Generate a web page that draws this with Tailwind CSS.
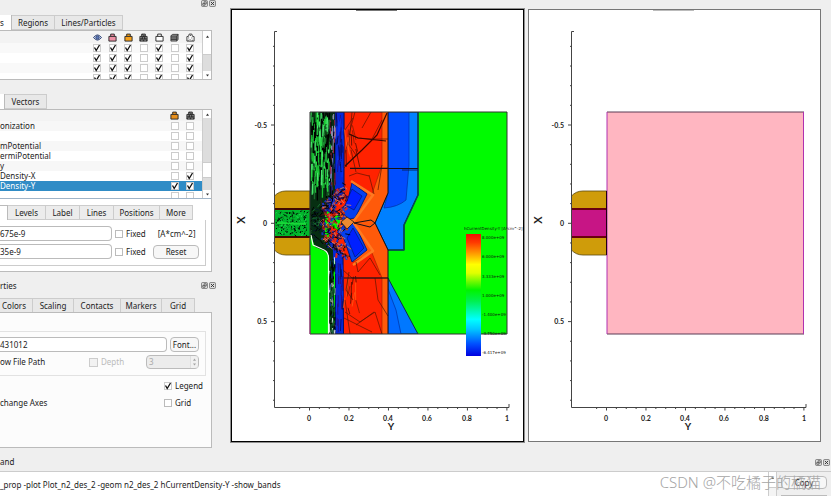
<!DOCTYPE html>
<html lang="en">
<head>
<meta charset="utf-8">
<title>Plot viewer</title>
<script src="https://cdn.jsdelivr.net/npm/@tailwindcss/browser@4"></script>
</head>
<body class="h-screen overflow-hidden bg-[#efefef] font-['Noto_Sans','Noto_Sans_CJK_SC',sans-serif] text-[8px] leading-[10px] text-[#222]">
<svg class="hidden">
  <symbol id="box" viewBox="0 0 10 10"><path d="M1 3.8H9V9H1Z M3 3.6V1.2H7V3.6" stroke="#222" stroke-width="1"/></symbol>
  <symbol id="mesh" viewBox="0 0 10 10"><path d="M1 3.8H9V9H1Z M3 3.6V1.2H7V3.6" fill="#999" stroke="#222"/><path d="M1 9L5 3.8L9 9M3 4L5 9L7 4M1 6.5H9M3.5 1.5L6.5 3.5" fill="none" stroke="#222" stroke-width=".8"/></symbol>
  <symbol id="dots" viewBox="0 0 10 10"><path d="M1 4L3 3.6L3.5 1.2H6.5L7 3.6L9 4V9H1Z" fill="#fff" stroke="#333"/><path d="M3 5v1M6.5 5v1M4.5 7v1M7 7.5v1M2.5 7.5v1M5 2.2v1" stroke="#333"/></symbol>
  <symbol id="cube" viewBox="0 0 10 10"><path d="M1 3L3 1.5H9V7L7.500 9H1Z" fill="#999" stroke="#222" stroke-width=".8"/><path d="M1 3.500H7.500V9M7.500 3.500L9 1.500M1 5.500H7.500M1 7.200H7.500" fill="none" stroke="#222" stroke-width=".8"/></symbol>
  <symbol id="eye" viewBox="0 0 10 10"><path d="M.5 5Q5-.8 9.500 5Q5 10.800 .5 5Z" fill="#b9c6e2" stroke="#2b3f70"/><circle cx="5" cy="5" r="1.900" fill="#5b78b8" stroke="#24365f" stroke-width=".7"/></symbol>
  <symbol id="float" viewBox="0 0 8 8"><rect x=".5" y=".5" width="7" height="7" rx="1.500" fill="#ddd" stroke="#777"/><path d="M2 4h2.500v2H2zM3.500 4V2H6v2.500H4.500" fill="none" stroke="#444" stroke-width=".8"/></symbol>
  <symbol id="close" viewBox="0 0 8 8"><rect x=".5" y=".5" width="7" height="7" rx="1.500" fill="#ddd" stroke="#777"/><path d="M2.200 2.200L5.800 5.800M5.800 2.200L2.200 5.800" stroke="#333" stroke-width="1.100"/></symbol>
  <symbol id="up" viewBox="0 0 6 4"><path d="M1 3.500L3 .8L5 3.500Z" fill="#333"/></symbol>
  <symbol id="down" viewBox="0 0 6 4"><path d="M1 .5L3 3.200L5 .5Z" fill="#333"/></symbol>
  <symbol id="axes" viewBox="232 10 291 431">
    <g id="axislines" fill="none" stroke="#444" stroke-width="1"></g>
    <g class="font-['Lato',sans-serif] font-bold" fill="#222" font-size="7">
      <g text-anchor="end"><text x="267" y="128">-0.5</text><text x="267" y="226">0</text><text x="267" y="324">0.5</text></g>
      <g text-anchor="middle"><text x="309" y="421">0</text><text x="349" y="421">0.2</text><text x="388" y="421">0.4</text><text x="427" y="421">0.6</text><text x="467" y="421">0.8</text><text x="507" y="421">1</text>
      <text x="391" y="430" font-size="10">Y</text><text transform="translate(245 220) rotate(-90)" font-size="11">X</text></g>
    </g>
  </symbol>
</svg>

<div class="flex h-full flex-col">
  <div class="flex h-[453px] shrink-0">
    <aside class="flex w-[231px] shrink-0 flex-col">
      <div class="flex h-[15px] justify-end gap-px pr-[15px]">
        <button aria-label="Float" class="size-[7px]"><svg class="size-[7px]"><use href="#float"/></svg></button>
        <button aria-label="Close" class="size-[7px]"><svg class="size-[7px]"><use href="#close"/></svg></button>
      </div>
      <nav class="flex h-[15px] w-[212px]">
        <button class="w-3 border-r border-[#bbb] bg-white text-left">s</button>
        <button class="w-[43px] border-y border-r border-[#ccc] bg-[#e8e8e8]">Regions</button>
        <button class="w-[68px] border-y border-r border-[#ccc] bg-[#e8e8e8]">Lines/Particles</button>
      </nav>
      <div class="flex h-[50px] w-[212px] border-y border-r border-[#bbb] bg-white">
        <div class="min-w-0 flex-1 overflow-hidden">
          <table class="w-full table-fixed">
            <colgroup><col><col class="w-4"><col class="w-[15px]"><col class="w-4"><col class="w-[15px]"><col class="w-4"><col class="w-[15px]"><col class="w-4"><col class="w-1"></colgroup>
            <thead><tr class="h-3 bg-[#f3f3f3]"><th></th>
              <th><svg class="mx-auto size-[9px]"><use href="#eye"/></svg></th>
              <th><svg class="mx-auto size-[9px]" fill="#ee8fa4"><use href="#box"/></svg></th>
              <th><svg class="mx-auto size-[9px]" fill="#f5a11d"><use href="#box"/></svg></th>
              <th><svg class="mx-auto size-[9px]"><use href="#mesh"/></svg></th>
              <th><svg class="mx-auto size-[9px]" fill="#fff"><use href="#box"/></svg></th>
              <th><svg class="mx-auto size-[9px]"><use href="#cube"/></svg></th>
              <th><svg class="mx-auto size-[9px]"><use href="#dots"/></svg></th><th></th></tr></thead>
            <tbody id="materials"></tbody>
          </table>
        </div>
        <div class="flex w-[9px] flex-col items-center border-l border-[#ccc] bg-[#ddd]">
          <div class="flex h-6 w-full justify-center border-b border-[#ccc] bg-white pt-1"><svg class="h-[3px] w-[5px]"><use href="#up"/></svg></div>
          <div class="flex-1"></div>
          <div class="flex h-2 w-full items-center justify-center bg-white"><svg class="h-[3px] w-[5px]"><use href="#down"/></svg></div>
        </div>
      </div>
      <nav class="mt-[14px] flex h-[15px] w-[212px]">
        <div class="w-[5px] border-r border-[#bbb] bg-white"></div>
        <button class="w-[42px] border-y border-r border-[#ccc] bg-[#e8e8e8]">Vectors</button>
      </nav>
      <section class="flex h-[163px] w-[212px] flex-col border-y border-r border-[#bbb] bg-white">
        <div class="flex h-[89px] border-b border-[#9fb4c8]">
          <div class="min-w-0 flex-1 overflow-hidden">
            <table class="w-full table-fixed">
              <colgroup><col><col class="w-[15px]"><col class="w-4"><col class="w-1"></colgroup>
              <thead><tr class="h-[11px] bg-[#f3f3f3]"><th></th>
                <th><svg class="mx-auto size-[9px]" fill="#e8901c"><use href="#box"/></svg></th>
                <th><svg class="mx-auto size-[9px]"><use href="#mesh"/></svg></th><th></th></tr></thead>
              <tbody id="fields"></tbody>
            </table>
          </div>
          <div class="flex w-[9px] flex-col items-center border-l border-[#ccc] bg-[#ddd]">
            <div class="flex h-2 w-full items-center justify-center bg-white"><svg class="h-[3px] w-[5px]"><use href="#up"/></svg></div>
            <div class="h-11"></div>
            <div class="h-4 w-full border-y border-[#ccc] bg-white"></div>
            <div class="flex-1"></div>
            <div class="flex h-2 w-full items-center justify-center bg-white"><svg class="h-[3px] w-[5px]"><use href="#down"/></svg></div>
          </div>
        </div>
        <nav class="mt-[6px] flex h-[15px]">
          <div class="w-2 border-r border-t border-[#bbb]"></div>
          <button class="w-[38px] border-y border-r border-[#ccc] bg-[#ececec]">Levels</button>
          <button class="w-[34px] border-y border-r border-[#ccc] bg-[#ececec]">Label</button>
          <button class="w-[34px] border-y border-r border-[#ccc] bg-[#ececec]">Lines</button>
          <button class="w-[46px] border-y border-r border-[#ccc] bg-[#ececec]">Positions</button>
          <button class="w-[33px] border-y border-r border-[#ccc] bg-[#ececec]">More</button>
        </nav>
        <div class="flex h-[46px] w-[206px] flex-col gap-[3px] border-r border-b border-[#ccc] pt-[6px]">
          <div class="flex h-[15px] items-center">
            <input aria-label="Minimum" value="675e-9" class="h-[15px] w-28 rounded-r-sm border border-l-0 border-[#bbb] bg-white">
            <label class="ml-[3px] flex items-center gap-[3px]"><input type="checkbox" class="size-2 appearance-none border border-[#bbb] bg-white">Fixed</label>
            <span class="ml-3">[A*cm^-2]</span>
          </div>
          <div class="flex h-[15px] items-center">
            <input aria-label="Maximum" value="35e-9" class="h-[15px] w-28 rounded-r-sm border border-l-0 border-[#bbb] bg-white">
            <label class="ml-[3px] flex w-[38px] items-center gap-[3px]"><input type="checkbox" class="size-2 appearance-none border border-[#bbb] bg-white">Fixed</label>
            <button class="h-[14px] w-[46px] rounded-sm border border-[#bbb] bg-[#f7f7f7]">Reset</button>
          </div>
        </div>
      </section>
      <div class="flex h-[26px] items-center justify-between pr-[15px] pt-px">
        <span>rties</span>
        <div class="flex gap-px">
          <button aria-label="Float" class="size-[7px]"><svg class="size-[7px]"><use href="#float"/></svg></button>
          <button aria-label="Close" class="size-[7px]"><svg class="size-[7px]"><use href="#close"/></svg></button>
        </div>
      </div>
      <nav class="flex h-[14px]">
        <button class="w-[33px] border-t border-r border-[#ccc] bg-[#e8e8e8] pr-[6px] text-right">Colors</button>
        <button class="w-[41px] border-t border-r border-[#ccc] bg-[#e8e8e8]">Scaling</button>
        <button class="w-[47px] border-t border-r border-[#ccc] bg-[#e8e8e8]">Contacts</button>
        <button class="w-[41px] border-t border-r border-[#ccc] bg-[#e8e8e8]">Markers</button>
        <button class="w-[33px] border-t border-r border-[#ccc] bg-[#e8e8e8]">Grid</button>
      </nav>
      <section class="flex h-[136px] w-[212px] flex-col border-y border-r border-[#bbb] bg-[#fcfcfc] pt-[18px]">
        <div class="flex h-[45px] w-[206px] flex-col gap-[3px] border-y border-r border-[#e2e2e2] pt-[5px]">
          <div class="flex h-[15px] items-center gap-[3px]">
            <input aria-label="Title" value="431012" class="h-[15px] w-[167px] rounded-r-sm border border-l-0 border-[#bbb] bg-white">
            <button class="h-[15px] w-[29px] rounded-sm border border-[#bbb] bg-[#f7f7f7]">Font...</button>
          </div>
          <div class="flex h-[14px] items-center">
            <span class="w-[89px]">ow File Path</span>
            <label class="flex w-[57px] items-center gap-[3px] text-[#bbb]"><input type="checkbox" disabled class="size-[9px] appearance-none border border-[#ccc] bg-[#f2f2f2]">Depth</label>
            <div class="flex h-[14px] w-[53px] rounded-sm border border-[#bbb] bg-[#ececec]">
              <input aria-label="Depth value" disabled value="3" class="min-w-0 flex-1 pl-[2px] text-[#aaa]">
              <div class="flex w-2 flex-col items-center justify-evenly border-l border-[#ccc] bg-[#f6f6f6] opacity-40"><svg class="h-[3px] w-[5px]"><use href="#up"/></svg><svg class="h-[3px] w-[5px]"><use href="#down"/></svg></div>
            </div>
          </div>
        </div>
        <div class="mt-[5px] flex h-[10px] items-center pl-[164px]">
          <label class="flex items-center gap-[3px]"><input type="checkbox" checked class="size-2 appearance-none border border-[#ccc] bg-white"><svg class="-ml-[11px] size-2" viewBox="0 0 8 8"><path d="M1.500 3.500L3.200 6.500L6.500 1" fill="none" stroke="#111" stroke-width="1.300"/></svg>Legend</label>
        </div>
        <div class="mt-[7px] flex h-[10px] items-center">
          <span class="w-[164px]">change Axes</span>
          <label class="flex items-center gap-[3px]"><input type="checkbox" class="size-2 appearance-none border border-[#bbb] bg-white">Grid</label>
        </div>
      </section>
    </aside>

    <main class="flex min-w-0 flex-1 gap-1 pt-[9px] pr-[10px] pb-[11px]">
      <figure class="min-w-0 flex-1 border border-black bg-white outline outline-black/40">
        <svg class="size-full" viewBox="232 10 291 431" aria-label="hCurrentDensity-Y">
          <defs>
            <linearGradient id="rainbow" x2="0" y2="1"><stop offset="0" stop-color="#f01000"/><stop offset=".07" stop-color="#ff3a00"/><stop offset=".15" stop-color="#ff9000"/><stop offset=".25" stop-color="#ffff00"/><stop offset=".32" stop-color="#e0ff00"/><stop offset=".46" stop-color="#00f400"/><stop offset=".55" stop-color="#00f050"/><stop offset=".7" stop-color="#00ffff"/><stop offset=".78" stop-color="#00c8ff"/><stop offset=".9" stop-color="#0050ff"/><stop offset="1" stop-color="#0000e0"/></linearGradient>
            <clipPath id="device"><path d="M310 112H507V334H310Z"/></clipPath>
          </defs>
          <path d="M356 10.500H397" stroke="#777"/>
          <path d="M274.500 196Q279 191 286 191H310V255H286Q279 255 274.500 250Z" fill="#cf9c0a" stroke="#5a4a10" stroke-width=".8"/>
          <path d="M274.500 208H310V238H274.500Z" fill="#400a00"/>
          <path d="M274.500 210H310V236H274.500Z" fill="#00b82c"/>
          <g id="gate" fill="none"></g>
          <rect x="310" y="112" width="197" height="222" fill="#00fb00"/>
          <g clip-path="url(#device)" stroke-linejoin="round">
            <path d="M388 112H418V195L404 225V250H388L375 223L388 193Z" fill="#0080ff" stroke="#003050"/>
            <path d="M388 112H409V165L406 200Q398 207 384 208L388 193Z" fill="#004dff" stroke="#0030a0" stroke-width=".7"/>
            <path d="M418 112V195L404 225V250H388" fill="none" stroke="#084a50" stroke-width="1.600"/>
            <path d="M388 278L418 334H388Z" fill="#0078ff" stroke="#103040"/>
            <path d="M388 289L396 310L401 334H388Z" fill="#0068ff" stroke="#0030a0" stroke-width=".7"/>
            <path d="M340 112H388V193L375 223L388 250V334H340Z" fill="#ff5a0a"/>
            <path d="M344 112H382V165L372 194L353 181L349 206L330 220V190L344 165Z" fill="#ff2200" stroke="#9c1c00" stroke-width=".6"/>
            <path d="M330 225L345 235L353 262L372 253L382 278V334H342V270L330 245Z" fill="#ff2200" stroke="#9c1c00" stroke-width=".6"/>
            <path d="M335 112H344V190L330 212L322 208L335 185Z" fill="#0628d8" stroke="#001066"/>
            <path d="M326 238L343 252L343.500 334H335.500V262L326 252Z" fill="#0628d8" stroke="#001066"/>
            <path d="M310 112H335V190L325 214L325 234L333 250L335 334H329V255L316 250L310 232Z" fill="#072f12"/>
            <path d="M311 236L313 246L322 250Q328 251 328 258L329 334H312Z" fill="#00fb00"/>
            <path d="M352 183L367 194L355 218L349 219L339 210L347 204Z" fill="#0540ef" stroke="#002080"/>
            <path d="M352 189L362 196L354 210L345 205Z" fill="#0020ff" stroke="#00145c" stroke-width=".6"/>
            <path d="M348 220L354 223L367 250L352 262L344 239L338 232Z" fill="#0540ef" stroke="#002080"/>
            <path d="M353 228L364 248L355 257L347 238Z" fill="#0020ff" stroke="#00145c" stroke-width=".6"/>
            <path d="M351 181L373 195L353 222L373 251L353 265" fill="none" stroke="#ff7a20" stroke-width="2.500"/>
            <g id="noise" fill="none"></g>
            <path d="M311 235L313 245L322 249Q328.500 251 328.500 258V334" fill="none" stroke="#f5fff0" stroke-width="1.200"/>
            <path d="M341 222L347 217L354 222L347 229Z" fill="#ec8a30" stroke="#111" stroke-width=".7"/>
            <g fill="none" stroke="#5c1500" stroke-width=".7">
              <path d="M352 112L349 145L356 155L344 168M355 112L349 134L358 138L372 139L382 120M362 128L371 112M345 130L353 118M351 150L356 172M350 168L388 168M369 175L374 194M349 176L357 173L369 176M382 165L378 190M388 139L372 139M343 270L352 278L388 278M356 262L358 272L370 258L380 275M345 312L360 322L375 312L382 334M344 318L372 332M356 325L374 312M345 300L350 334M375 278L378 300L388 316M349 272L346 290L353 300"/>
              <path d="M387 113L377 135L362 150L345 166M349 134L358 138L386 141" stroke="#3a0800" stroke-width="1.200"/>
            </g>
            <path d="M388 112V193L375 223L388 250V334M354 223L371 220L375 223L370 227L354 223M350 168.500H418M344 278H388" fill="none" stroke="#10131c" stroke-width="1"/>
            <path d="M402 170H418" stroke="#06265e"/>
          </g>
          <path d="M310 112H507V334H310Z" fill="none" stroke="#333"/>
          <path d="M310 255V334" stroke="#c02890" stroke-width=".8"/>
          <rect x="466" y="234" width="15" height="122" fill="url(#rainbow)"/>
          <g class="font-['DejaVu_Sans',sans-serif]" font-size="4" fill="#111">
            <text x="464" y="230">hCurrentDensity-Y [A*cm^-2]</text>
            <text x="482" y="239">8.000e+09</text><text x="482" y="258">6.000e+09</text><text x="482" y="278">3.333e+09</text><text x="482" y="297">1.000e+09</text><text x="482" y="316">-1.400e+09</text><text x="482" y="335">-3.750e+09</text><text x="482" y="354">-6.417e+09</text>
          </g>
          <use href="#axes" x="232" y="10" width="291" height="431"/>
        </svg>
      </figure>
      <figure class="min-w-0 flex-1 border border-[#777] bg-white">
        <svg class="size-full" viewBox="232 10 291 431" aria-label="Device geometry">
          <path d="M356 10.500H397" stroke="#bbb"/>
          <path d="M274.500 196Q279 191 286 191H310V255H286Q279 255 274.500 250Z" fill="#cf9c0a" stroke="#5a4a10" stroke-width=".8"/>
          <path d="M274.500 208H310V238H274.500Z" fill="#6a0010"/>
          <path d="M274.500 210H310V236H274.500Z" fill="#c71585"/>
          <rect x="310" y="112" width="197" height="222" fill="#ffb6c1"/>
          <path d="M310 112H507M310 334H507" stroke="#5b3a55"/>
          <path d="M310 112V334M506.500 112V334" stroke="#b030b0"/>
          <path d="M309.500 191V255" stroke="#210010"/>
          <use href="#axes" x="232" y="10" width="291" height="431"/>
        </svg>
      </figure>
    </main>
  </div>

  <footer class="relative flex min-h-0 flex-1 flex-col">
    <div class="flex h-[19px] shrink-0 items-center justify-between border-b border-[#ccc] pr-px">
      <span>and</span>
      <div class="flex gap-px">
        <button aria-label="Float" class="size-[7px]"><svg class="size-[7px]"><use href="#float"/></svg></button>
        <button aria-label="Close" class="size-[7px]"><svg class="size-[7px]"><use href="#close"/></svg></button>
      </div>
    </div>
    <div class="flex min-h-0 flex-1 bg-white">
      <p class="flex flex-1 items-center pt-[2px]">_prop -plot Plot_n2_des_2 -geom n2_des_2 hCurrentDensity-Y -show_bands</p>
      <div class="flex w-[9px] flex-col items-center border-x border-[#ccc] bg-white pt-1"><svg class="h-[3px] w-[5px]"><use href="#up"/></svg><div class="mt-2 w-full flex-1 border-t border-[#ccc] bg-[#f4f4f4]"></div></div>
      <div class="flex w-[54px] flex-col items-center gap-[6px] overflow-hidden bg-[#efefef] pt-1">
        <button class="h-[13px] w-[46px] shrink-0 rounded-sm border border-[#bbb] bg-[#f7f7f7]">Copy</button>
        <div class="h-[10px] w-[46px] shrink-0 border border-[#bbb]"></div>
      </div>
    </div>
    <div class="absolute right-[10px] bottom-1 whitespace-nowrap text-[15px] leading-5 font-light text-[#a5a5a5]">CSDN @不吃橘子的橘猫</div>
  </footer>
</div>

<script>
  const tick = '<svg class="-mt-2 mx-auto size-2 relative" viewBox="0 0 8 8"><path d="M1.5 3.500L3.200 6.500L6.500 1" fill="none" stroke="#111" stroke-width="1.300"/></svg>';
  const cell = (on, name) => `<td class="p-0"><input type="checkbox" aria-label="${name}" ${on ? 'checked' : ''} class="mx-auto block size-2 appearance-none border border-[#ccc] bg-white">${on ? tick : ''}</td>`;
  const cols = ['Visible', 'Bulk', 'Field', 'Mesh', 'Border', 'Translucent', 'Particles'];
  document.getElementById('materials').innerHTML = [0, 1, 2, 3].map(i =>
    `<tr class="h-[10px] ${i % 2 ? 'bg-white' : 'bg-[#f9f9f9]'}"><td></td>${cols.map((c, k) => cell(k !== 3 && k !== 5, c)).join('')}<td></td></tr>`).join('');
  document.getElementById('fields').innerHTML = [['onization'], [''], ['mPotential'], ['ermiPotential'], ['y'], ['Density-X', 0, 1], ['Density-Y', 1, 1], ['']].map(([n, a, b], i) =>
    `<tr class="h-[10px] ${i === 6 ? 'bg-[#308cc6] text-white' : i % 2 ? 'bg-white' : 'bg-[#f7f7f7]'}"><td class="p-0 leading-[10px]">${n}</td>${cell(a, 'Bands')}${cell(b, 'Lines')}<td></td></tr>`).join('');

  let d = 'M277 31.500H274.500V407.500H509V404';
  for (let k = -9; k <= 9; k++) d += `M${k % 5 ? 273 : 271} ${223.300 + k * 19.660}H274.500`;
  for (let k = -1; k <= 20; k++) d += `M${309.500 + k * 9.870} 407.500v${k % 4 ? 1.500 : 3}`;
  document.getElementById('axislines').innerHTML = `<path d="${d}"/>`;

  let seed = 11;
  const rnd = () => (seed = (seed * 16807) % 2147483647) / 2147483647;
  const between = (a, b) => a + rnd() * (b - a);
  const pick = list => list[Math.floor(rnd() * list.length)];
  const stroke = (x, y, dx, dy, c, w) => `<path d="M${x.toFixed(1)} ${y.toFixed(1)}l${dx.toFixed(1)} ${dy.toFixed(1)}" stroke="${c}" stroke-width="${w}"/>`;
  let out = '';
  for (let i = 0; i < 230; i++) out += stroke(between(311, 330), between(110, 186), between(-.5, .5), between(4, 16), pick(['#18c531', '#28d846', '#4be870', '#20b83c', '#000', '#000', '#176d2a']), 1.300);
  for (let i = 0; i < 50; i++) out += stroke(between(330, 336), between(112, 190), between(-.5, .5), between(3, 14), pick(['#000', '#000', '#9a98c0', '#a02040', '#1c2b90']), 1);
  for (let i = 0; i < 30; i++) out += stroke(between(336, 343), between(112, 170), between(-1, 1), between(6, 16), pick(['#00084c', '#0a38ff', '#300870']), .7);
  for (let i = 0; i < 20; i++) out += stroke(between(336, 343), between(262, 320), between(-1, 1), between(6, 16), pick(['#00084c', '#0a38ff', '#300870']), .7);
  for (let i = 0; i < 80; i++) out += stroke(between(329, 335), between(255, 332), between(-.5, .5), between(2, 9), pick(['#000', '#000', '#dfe9e9', '#156a30', '#102a90']), .9);
  for (let i = 0; i < 170; i++) {
    const x = between(322, 346), lim = 20 + (x - 322) * .7;
    out += stroke(x, 223 + between(-lim, lim), between(-3, 3), between(-5, 5), pick(['#e02818', '#1a35d0', '#1430b8', '#c83010', '#3a0a50']), 2);
  }
  for (let i = 0; i < 260; i++) {
    const x = between(311, 348), lim = 12 + (x - 311) * .75;
    out += stroke(x, 223 + between(-lim, lim), between(-5, 5), between(-4, 4), pick(x < 320 ? ['#000', '#000', '#061a2e', '#1b7435'] : ['#000', '#000', '#1a0a30', '#501018', '#d88060']), .9);
  }
  for (let i = 0; i < 24; i++) out += stroke(between(344, 356), between(115, 150) + (i % 2) * 160, between(-4, 4), between(6, 20), pick(['#7a1800', '#3a0800', '#ff6414']), .7);
  document.getElementById('noise').innerHTML = out;

  let gate = '';
  for (let i = 0; i < 210; i++) gate += stroke(between(276, 307), between(211, 235), between(-2, 2), between(-2, 2), pick(['#001a06', '#000', '#000', '#22d850', '#0a8a28']), 1);
  document.getElementById('gate').innerHTML = gate + stroke(277, 223, 29, 1, '#18d838', 2);
</script>
</body>
</html>
